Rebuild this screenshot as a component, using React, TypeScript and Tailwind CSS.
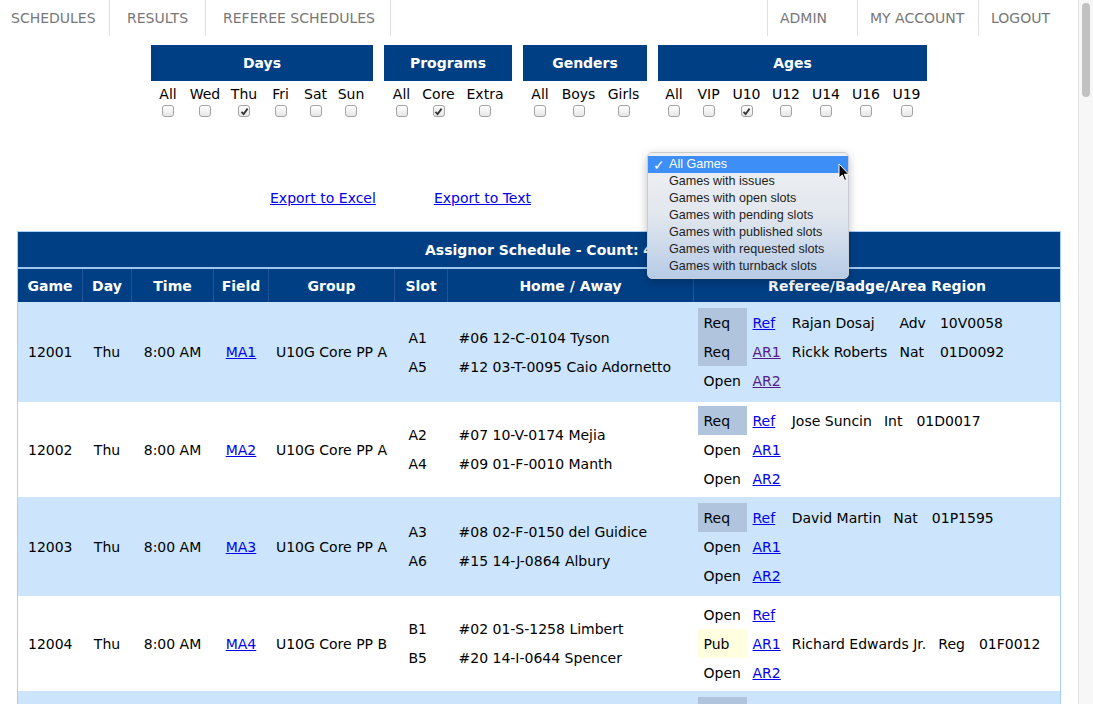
import React from "react";

type Opt = { label: string; w: string; on?: boolean };
type Filter = { title: string; w: string; opts: Opt[] };

const filters: Filter[] = [
  {
    title: "Days",
    w: "w-[222px]",
    opts: [
      { label: "All", w: "w-[34px]" },
      { label: "Wed", w: "w-[40px]" },
      { label: "Thu", w: "w-[38px]", on: true },
      { label: "Fri", w: "w-[35px]" },
      { label: "Sat", w: "w-[35px]" },
      { label: "Sun", w: "w-[36px]" },
    ],
  },
  {
    title: "Programs",
    w: "w-[128px]",
    opts: [
      { label: "All", w: "w-[35px]" },
      { label: "Core", w: "w-[39px]", on: true },
      { label: "Extra", w: "w-[54px]" },
    ],
  },
  {
    title: "Genders",
    w: "w-[124px]",
    opts: [
      { label: "All", w: "w-[34px]" },
      { label: "Boys", w: "w-[43px]" },
      { label: "Girls", w: "w-[47px]" },
    ],
  },
  {
    title: "Ages",
    w: "w-[269px]",
    opts: [
      { label: "All", w: "w-[32px]" },
      { label: "VIP", w: "w-[37px]" },
      { label: "U10", w: "w-[39px]", on: true },
      { label: "U12", w: "w-[40px]" },
      { label: "U14", w: "w-[40px]" },
      { label: "U16", w: "w-[40px]" },
      { label: "U19", w: "w-[41px]" },
    ],
  },
];

type Ref = { st: string; pos: string; visited?: boolean; name?: string; badge?: string; id?: string };
type Game = {
  id: string;
  field: string;
  group: string;
  slots: string[];
  teams: string[];
  refs: Ref[];
  h: string;
  bg: string;
};

const games: Game[] = [
  {
    id: "12001",
    field: "MA1",
    group: "U10G Core PP A",
    slots: ["A1", "A5"],
    teams: ["#06 12-C-0104 Tyson", "#12 03-T-0095 Caio Adornetto"],
    refs: [
      { st: "Req", pos: "Ref", name: "Rajan Dosaj", badge: "Adv", id: "10V0058" },
      { st: "Req", pos: "AR1", visited: true, name: "Rickk Roberts", badge: "Nat", id: "01D0092" },
      { st: "Open", pos: "AR2", visited: true },
    ],
    h: "h-[100px]",
    bg: "bg-[#cce5fc]",
  },
  {
    id: "12002",
    field: "MA2",
    group: "U10G Core PP A",
    slots: ["A2", "A4"],
    teams: ["#07 10-V-0174 Mejia", "#09 01-F-0010 Manth"],
    refs: [
      { st: "Req", pos: "Ref", name: "Jose Suncin", badge: "Int", id: "01D0017" },
      { st: "Open", pos: "AR1" },
      { st: "Open", pos: "AR2" },
    ],
    h: "h-[95px]",
    bg: "bg-white",
  },
  {
    id: "12003",
    field: "MA3",
    group: "U10G Core PP A",
    slots: ["A3", "A6"],
    teams: ["#08 02-F-0150 del Guidice", "#15 14-J-0864 Albury"],
    refs: [
      { st: "Req", pos: "Ref", name: "David Martin", badge: "Nat", id: "01P1595" },
      { st: "Open", pos: "AR1" },
      { st: "Open", pos: "AR2" },
    ],
    h: "h-[99px]",
    bg: "bg-[#cce5fc]",
  },
  {
    id: "12004",
    field: "MA4",
    group: "U10G Core PP B",
    slots: ["B1", "B5"],
    teams: ["#02 01-S-1258 Limbert", "#20 14-I-0644 Spencer"],
    refs: [
      { st: "Open", pos: "Ref" },
      { st: "Pub", pos: "AR1", name: "Richard Edwards Jr.", badge: "Reg", id: "01F0012" },
      { st: "Open", pos: "AR2" },
    ],
    h: "h-[95px]",
    bg: "bg-white",
  },
];

const menuItems = [
  "Games with issues",
  "Games with open slots",
  "Games with pending slots",
  "Games with published slots",
  "Games with requested slots",
  "Games with turnback slots",
];

function Checkbox({ on }: { on?: boolean }) {
  return (
    <span className="mt-[2px] flex h-[12px] w-[12px] items-center justify-center rounded-[3px] border border-[#a3a3a3] bg-gradient-to-b from-white to-[#e6e6e6]">
      {on && (
        <svg width="9" height="9" viewBox="0 0 9 9">
          <path d="M1.5 4.8 L3.6 7 L7.6 1.6" fill="none" stroke="#333" strokeWidth="1.8" />
        </svg>
      )}
    </span>
  );
}

function statusBg(st: string) {
  if (st === "Req") return "bg-[#b0c4de]";
  if (st === "Pub") return "bg-[#ffffe0]";
  return "";
}

function RefGrid({ refs }: { refs: Ref[] }) {
  return (
    <div className="grid grid-cols-[49px_auto_auto_auto_auto] justify-start">
      {refs.map((r, i) => (
        <React.Fragment key={i}>
          <div className={`flex h-[29px] items-center pl-[6px] pt-[2px] ${statusBg(r.st)}`}>{r.st}</div>
          <div className="flex items-center pl-[6px] pr-[11px] pt-[2px]">
            <a className={`underline ${r.visited ? "text-[#551a8b]" : "text-[#0000ee]"}`}>{r.pos}</a>
          </div>
          <div className="flex items-center pr-[12px] pt-[2px]">{r.name}</div>
          <div className="flex items-center pr-[14px] pt-[2px]">{r.badge}</div>
          <div className="flex items-center pt-[2px]">{r.id}</div>
        </React.Fragment>
      ))}
    </div>
  );
}

export default function App() {
  return (
    <div className="flex h-[704px] w-[1093px] overflow-hidden bg-white font-['DejaVu_Sans',Verdana,sans-serif] text-[14px] text-black">
      <div className="relative w-[1078px] shrink-0">
        {/* top nav */}
        <div className="flex h-[36px] justify-between text-[#777]">
          <div className="flex">
            <div className="flex w-[110px] items-center border-r border-[#e6dede] pl-[11px]">SCHEDULES</div>
            <div className="flex w-[96px] items-center border-r border-[#e6dede] pl-[17px]">RESULTS</div>
            <div className="flex w-[185px] items-center border-r border-[#e6dede] pl-[17px]">REFEREE SCHEDULES</div>
          </div>
          <div className="flex">
            <div className="flex w-[90px] items-center border-l border-[#e6dede] pl-[12px]">ADMIN</div>
            <div className="flex w-[121px] items-center border-l border-[#e6dede] pl-[12px]">MY ACCOUNT</div>
            <div className="flex w-[100px] items-center border-l border-[#e6dede] pl-[12px]">LOGOUT</div>
          </div>
        </div>

        {/* filters */}
        <div className="flex gap-[11px] pl-[151px] pt-[9px]">
          {filters.map((f) => (
            <div key={f.title} className={f.w}>
              <div className="flex h-[36px] items-center justify-center bg-[#003f84] font-bold text-white">{f.title}</div>
              <div className="mt-[4px] flex">
                {f.opts.map((o) => (
                  <div key={o.label} className={`flex flex-col items-center ${o.w}`}>
                    <span className="leading-[18px]">{o.label}</span>
                    <Checkbox on={o.on} />
                  </div>
                ))}
              </div>
            </div>
          ))}
        </div>

        {/* export links */}
        <div className="mt-[72px] flex gap-[58px] pl-[270px] leading-[18px]">
          <a className="text-[#0000ee] underline">Export to Excel</a>
          <a className="text-[#0000ee] underline">Export to Text</a>
        </div>

        {/* schedule table */}
        <table className="ml-[17px] mt-[24px] w-[1043px] table-fixed border-collapse border border-[#a9cff3]">
          <colgroup>
            <col className="w-[65px]" />
            <col className="w-[49px]" />
            <col className="w-[82px]" />
            <col className="w-[55px]" />
            <col className="w-[126px]" />
            <col className="w-[53px]" />
            <col className="w-[246px]" />
            <col className="w-[367px]" />
          </colgroup>
          <thead>
            <tr className="h-[36px] bg-[#003f84]">
              <th colSpan={8} className="pt-[2px] text-center font-bold text-white">
                Assignor Schedule - Count: 4
              </th>
            </tr>
            <tr className="h-[34px] border-t-2 border-[#9cc8f0] bg-[#003f84] font-bold text-white">
              {["Game", "Day", "Time", "Field", "Group", "Slot", "Home / Away", "Referee/Badge/Area Region"].map((h, i) => (
                <th key={h} className={`pt-[2px] text-center ${i > 0 ? "border-l border-[#1f5596]" : ""}`}>
                  {h}
                </th>
              ))}
            </tr>
          </thead>
          <tbody>
            {games.map((g) => (
              <tr key={g.id} className={`${g.h} ${g.bg}`}>
                <td className="pt-[2px] text-center">{g.id}</td>
                <td className="pt-[2px] text-center">Thu</td>
                <td className="pt-[2px] text-center">8:00 AM</td>
                <td className="pt-[2px] text-center">
                  <a className="text-[#0000ee] underline">{g.field}</a>
                </td>
                <td className="pt-[2px] text-center">{g.group}</td>
                <td className="pl-[14px] pt-[2px]">
                  {g.slots.map((s) => (
                    <div key={s} className="leading-[29px]">{s}</div>
                  ))}
                </td>
                <td className="whitespace-nowrap pl-[11px] pt-[2px]">
                  {g.teams.map((t) => (
                    <div key={t} className="leading-[29px]">{t}</div>
                  ))}
                </td>
                <td className="whitespace-nowrap pl-[4px]">
                  <RefGrid refs={g.refs} />
                </td>
              </tr>
            ))}
            {/* next row, only its top edge is in view */}
            <tr className="h-[20px] bg-[#cce5fc]">
              <td colSpan={7} />
              <td className="pl-[4px] align-top">
                <div className="mt-[6px] h-[14px] w-[49px] bg-[#b0c4de]" />
              </td>
            </tr>
          </tbody>
        </table>

        {/* open select menu */}
        <div className="absolute left-[647px] top-[152px] w-[202px] rounded-[5px] border border-[#c9ccd1] bg-gradient-to-b from-[#eff0f2] via-[#e2e7ee] to-[#b6cbe6] py-[3px] font-['Liberation_Sans',Arial,sans-serif] text-[12.6px] text-[#1d1d1d] shadow-[0_3px_10px_rgba(0,0,0,0.25)]">
          <div className="flex h-[17px] items-center bg-[#3d8ef6] text-white">
            <span className="w-[21px] pl-[5px] text-[14px] leading-none">✓</span>
            <span>All Games</span>
          </div>
          {menuItems.map((m) => (
            <div key={m} className="flex h-[17px] items-center pl-[21px]">
              {m}
            </div>
          ))}
        </div>

        {/* mouse cursor */}
        <svg className="absolute left-[838px] top-[163px]" width="12" height="19" viewBox="0 0 12 19">
          <path d="M1 1 L1 15 L4.3 12 L6.6 17.4 L8.6 16.5 L6.4 11.3 L10.8 11.3 Z" fill="#000" stroke="#fff" strokeWidth="1" />
        </svg>
      </div>

      {/* scrollbar */}
      <div className="h-full w-[15px] border-l border-[#e4e4e4] bg-[#f7f7f7] pl-[3px] pt-[3px]">
        <div className="h-[94px] w-[8px] rounded-full bg-[#c1c1c1]" />
      </div>
    </div>
  );
}
